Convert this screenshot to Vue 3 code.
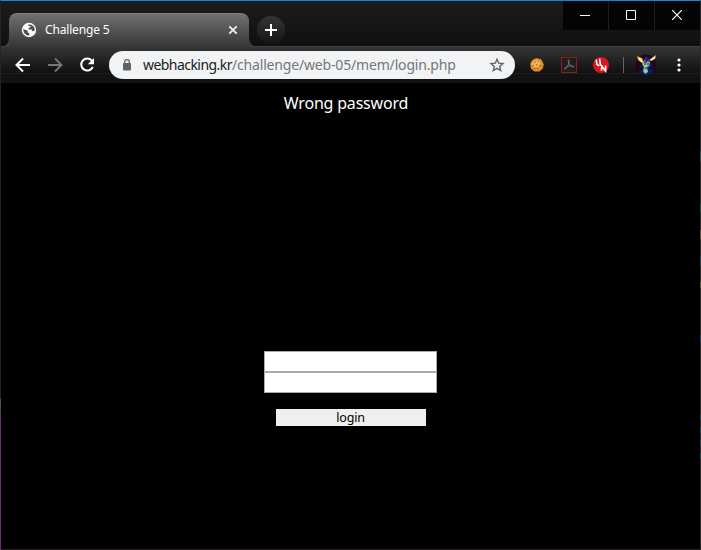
<script setup>
const url = { host: 'webhacking.kr', path: '/challenge/web-05/mem/login.php' }
</script>

<template>
  <div class="window">
    <header class="titlebar">
      <div class="tab">
        <svg class="globe" viewBox="0 0 16 16">
          <circle cx="8" cy="8" r="7.2" fill="#fff" />
          <path d="M2.2 7.2 L6.7 8.6 V10.4 L8.3 11.2 V13.5 C5 13.7 2.3 11 2.2 7.2Z M7 3 C9.2 1.8 12.6 3.4 13.6 6.5 L13.4 9 L11.4 9.2 L10.7 7.4 H7.8 L7.5 5.8 L9.5 5.3 L9.6 4 L7.6 4Z" fill="#4f4f4f" />
        </svg>
        <span class="tab-title">Challenge 5</span>
        <svg class="tab-close" viewBox="0 0 10 10"><path d="M1.3 1.3 L8.7 8.7 M8.7 1.3 L1.3 8.7" stroke="#f1f1f1" stroke-width="1.8" /></svg>
      </div>
      <div class="new-tab">
        <svg viewBox="0 0 12 12"><path d="M6 0V12M0 6H12" stroke="#fff" stroke-width="2" /></svg>
      </div>
      <div class="controls">
        <div class="control"><svg viewBox="0 0 10 10"><path d="M0 5.5H10" stroke="#fff" /></svg></div>
        <div class="control"><svg viewBox="0 0 10 10"><path d="M.5 .5H9.5V9.5H.5Z" fill="none" stroke="#fff" /></svg></div>
        <div class="control"><svg viewBox="0 0 10 10"><path d="M0 0L10 10M10 0L0 10" stroke="#fff" stroke-width="1.2" /></svg></div>
      </div>
    </header>

    <div class="toolbar">
      <svg class="nav" viewBox="0 0 16 16"><path d="M15 8H2M8 1.5L1.5 8L8 14.5" fill="none" stroke="#fff" stroke-width="2" /></svg>
      <svg class="nav" viewBox="0 0 16 16"><path d="M1 8H14M8 1.5L14.5 8L8 14.5" fill="none" stroke="#777" stroke-width="1.8" /></svg>
      <svg class="nav" viewBox="0 0 16 16">
        <path d="M12.8 3.6A6 6 0 1 0 13.8 9.8" fill="none" stroke="#fff" stroke-width="2" />
        <path d="M15 1V7.2H8.8Z" fill="#fff" />
      </svg>
      <div class="address">
        <svg class="lock" viewBox="0 0 10 12">
          <rect x="1" y="4" width="8" height="7.5" rx="1" fill="#5f6368" />
          <path d="M2.7 5V2.9a2.3 2.3 0 0 1 4.6 0V5" fill="none" stroke="#5f6368" stroke-width="1.2" />
        </svg>
        <span class="url"><span class="host">{{ url.host }}</span>{{ url.path }}</span>
        <svg class="star" viewBox="0 0 16 16"><path d="M8 2.2L9.7 6.2L14 6.6L10.7 9.4L11.7 13.6L8 11.4L4.3 13.6L5.3 9.4L2 6.6L6.3 6.2Z" fill="none" stroke="#5f6368" stroke-width="1.4" /></svg>
      </div>
      <svg class="ext cookie" viewBox="0 0 16 16">
        <path d="M5 .8L8 .3L12.5 1.5L14.5 4.5L15.7 7.5L14.6 12L10.8 15.5H5L1 12L.3 6.5L2 3Z" fill="#e08e2c" />
        <path d="M3 4L7 1.8L11.5 3L12 7L9 11L3.5 10.5L2 7Z" fill="#f2b455" />
        <path d="M5 4h1.3v1.3H5z M9 3h1.3v1.3H9z M7 7h1.3v1.3H7z M3 8h1.3v1.3H3z M11 8h1.3v1.3H11z M8 11h1.3v1.3H8z M4.5 11.5h1.3v1.3H4.5z" fill="#8a4d1c" />
      </svg>
      <svg class="ext" viewBox="0 0 16 16">
        <rect x=".5" y=".5" width="15" height="15" fill="#211d1d" stroke="#872015" />
        <path d="M7.2 3C6.7 5.5 8.5 8.8 12.7 10.2C13.5 9 9.5 8.2 6 9.7C3 11 3 13 4.2 12.2C6 11 8.5 6 8 3.3C7.8 2.5 7.3 2.5 7.2 3Z" fill="none" stroke="#777" stroke-width=".9" />
      </svg>
      <svg class="ext" viewBox="0 0 16 16">
        <circle cx="8" cy="8" r="8" fill="#d9171e" />
        <path d="M3.2 2.6L4 7.6L6.2 8.8M6.6 1.6L7.4 8L9.4 9M8.4 13.6L8.8 9.2L12.6 14L12.6 8.6" fill="none" stroke="#fff" stroke-width="1.6" />
      </svg>
      <i class="divider"></i>
      <svg class="avatar" viewBox="0 0 22 22">
        <circle cx="11" cy="11" r="10.5" fill="#20071c" />
        <path d="M3 18L8 15L10 18L14 14L18 16L17 19L12 22L6 20Z" fill="#061e62" />
        <path d="M9 5L11 2L14 5L15 9L17 11L14 14L9 15L7 12L8 9Z" fill="#122d80" />
        <path d="M2 2L3 6L7 9L9 8L7 4L4 3Z M21 1L20 5L16 7L14 6L17 4Z" fill="#dfb642" />
        <path d="M4 4L7 8M20 3L16 6" stroke="#fff2b4" stroke-width="1.6" />
        <path d="M8 8L11 9L13 7L15 8L14 12L12 13L13 18L10 20L8 17L9 13L7 10Z" fill="#80c79a" />
        <path d="M9 6H11V8H9Z M13 6H14V8H13Z" fill="#d01972" />
        <path d="M9 10H11M12 10H14M10 14H12M5 10L6 14M15 15L16 17" stroke="#191a66" />
        <path d="M11 11V13M10 17H12" stroke="#ece66e" />
      </svg>
      <svg class="more" viewBox="0 0 4 14"><circle cx="2" cy="2" r="1.6" /><circle cx="2" cy="7" r="1.6" /><circle cx="2" cy="12" r="1.6" /></svg>
    </div>

    <main class="page">
      <p class="message">Wrong password</p>
      <form class="login" @submit.prevent>
        <input type="text" aria-label="id" />
        <input type="password" aria-label="password" />
        <button type="submit">login</button>
      </form>
    </main>
  </div>
</template>

<style>
body { background: #000; overflow: hidden; }
</style>

<style scoped>
* { box-sizing: border-box; }
svg { display: block; flex: none; }
.window {
  position: relative;
  width: 701px;
  height: 550px;
  display: flex;
  flex-direction: column;
  background: #000;
  border-top: 1px solid #1883d7;
  border-left: 1px solid #242424;
  border-right: 1px solid #292929;
  border-bottom: 1px solid #2c192e;
  font-family: "Noto Sans", "Open Sans", sans-serif;
}
.window::before {
  content: "";
  position: absolute;
  left: -1px;
  top: 398px;
  bottom: -1px;
  width: 1px;
  background: linear-gradient(#555, #63316b 20px, #742878);
}
.window::after {
  content: "";
  position: absolute;
  right: -1px;
  top: 150px;
  width: 1px;
  height: 310px;
  background: linear-gradient(#294c4c 0 11px, transparent 11px 53px, #294c4c 53px 61px, transparent 61px 79px, #625544 79px 88px, transparent 88px 105px, #244450 105px 115px, transparent 115px 131px, #625544 131px 137px, transparent 137px 184px, #244450 184px 191px, transparent 191px 263px, #244450 263px 269px, transparent 269px 276px, #244450 276px 282px, transparent 282px 289px, #244450 289px 295px, transparent 295px 302px, #244450 302px 308px, transparent 308px);
}
.titlebar {
  display: flex;
  height: 46px;
  padding-left: 8px;
  background: linear-gradient(#1c1c1c, #101010);
  border-bottom: 1px solid #3f3f3f;
}
.tab {
  position: relative;
  width: 240px;
  height: 34px;
  margin-top: 12px;
  padding: 0 11px 1px 12px;
  display: flex;
  align-items: center;
  border-radius: 8px 8px 0 0;
  border-top: 1px solid #808080;
  background: linear-gradient(#707070, #363636);
}
.tab::before,
.tab::after {
  content: "";
  position: absolute;
  bottom: 0;
  width: 8px;
  height: 8px;
}
.tab::before {
  left: -8px;
  background: radial-gradient(circle at 0 0, transparent 7.3px, #3d3d3d 8px);
}
.tab::after {
  right: -8px;
  background: radial-gradient(circle at 100% 0, transparent 7.3px, #3d3d3d 8px);
}
.globe { width: 16px; height: 16px; }
.tab-title {
  margin-left: 8px;
  flex: 1;
  color: #fff;
  font-size: 12px;
  line-height: 16px;
  letter-spacing: -0.16px;
}
.tab-close { width: 10px; height: 10px; }
.new-tab {
  width: 28px;
  height: 28px;
  margin: 15px 0 0 8px;
  border-radius: 50%;
  background: linear-gradient(#353535, #151515);
  display: grid;
  place-items: center;
}
.new-tab svg { width: 12px; height: 12px; }
.controls {
  display: flex;
  gap: 1px;
  height: 29px;
  margin-left: auto;
  background: #1d1d1d;
}
.control {
  width: 45px;
  padding: 0 2px 1px 0;
  display: grid;
  place-items: center;
  background: #040404;
}
.control svg { width: 10px; height: 10px; }
.toolbar {
  height: 36px;
  display: flex;
  align-items: center;
  padding: 0 19px 0 14px;
  background: linear-gradient(#353535, #101010 26px, #202020 26px 27px, #121212 27px);
}
.nav { width: 16px; height: 16px; margin-right: 16px; }
.address {
  width: 407px;
  height: 28px;
  margin-left: -2px;
  padding: 0 10px 0 13px;
  display: flex;
  align-items: center;
  border-radius: 14px;
  background: #f1f3f4;
}
.lock { width: 10px; height: 12px; }
.url {
  margin-left: 11px;
  flex: 1;
  white-space: nowrap;
  color: #74777b;
  font-size: 14px;
  line-height: 20px;
  letter-spacing: -0.17px;
}
.host { color: #202124; letter-spacing: -0.55px; }
.star { width: 16px; height: 16px; }
.ext { width: 16px; height: 16px; margin-left: 16px; }
.cookie { width: 14px; height: 14px; margin: 0 1px 0 15px; }
.divider { width: 1px; height: 16px; margin-left: 14px; background: #646464; }
.avatar { width: 22px; height: 22px; margin-left: 11px; }
.more { width: 4px; height: 14px; margin-left: 20px; fill: #fff; }
.page {
  flex: 1;
  display: flex;
  flex-direction: column;
  align-items: center;
  background: #000;
}
.message {
  margin: 8px 9px 0 0;
  color: #fff;
  font-size: 16px;
  line-height: 24px;
  letter-spacing: -0.2px;
}
.login {
  margin-top: 236px;
  display: flex;
  flex-direction: column;
  align-items: center;
}
.login input {
  width: 173px;
  height: 21px;
  margin: 0;
  padding: 0;
  border: 1px solid #a9a9a9;
  border-radius: 0;
  background: #fff;
}
.login button {
  width: 150px;
  height: 17px;
  margin: 16px 0 0 1px;
  padding: 0 1px 0 0;
  border: 0;
  background: #efefef;
  color: #000;
  font: 12.5px/17px "Noto Sans", sans-serif;
  letter-spacing: -0.2px;
}
</style>
